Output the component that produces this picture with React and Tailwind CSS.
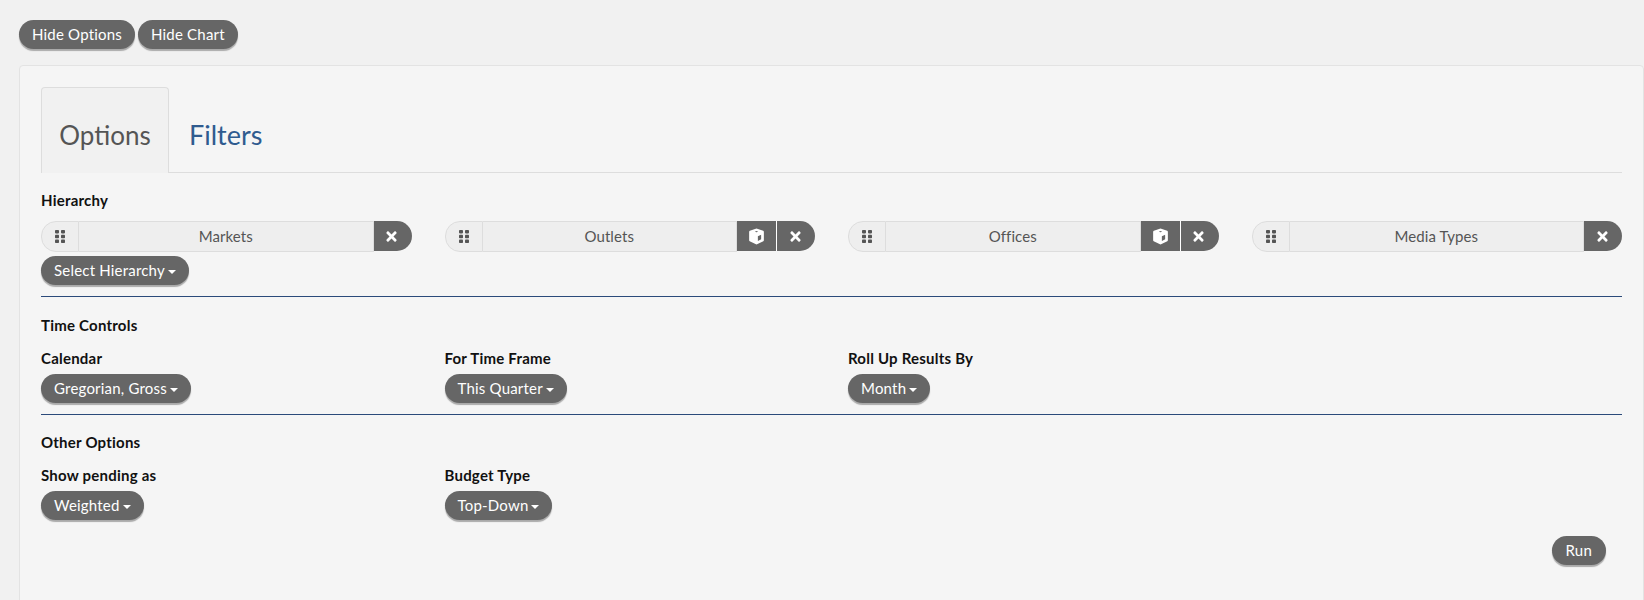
import React from "react";
import { FaTimes } from "react-icons/fa";

const Btn = ({ children, caret, className = "px-[13px]" }) => (
  <button className={`inline-flex h-[29px] items-center rounded-[15px] bg-[#666666] text-[15px] leading-none tracking-[0.2px] text-white shadow-[0_2px_1px_#aaaaaa] ${className}`}>
    {children}
    {caret && <span className="ml-[3px] mt-[2px] h-0 w-0 border-x-[4px] border-t-[4px] border-x-transparent border-t-white" />}
  </button>
);

const Grip = () => (
  <svg width="10" height="13" viewBox="0 0 10 13" fill="#555555">
    <rect x="0" y="0" width="4" height="3.4" rx="0.8" />
    <rect x="6" y="0" width="4" height="3.4" rx="0.8" />
    <rect x="0" y="4.8" width="4" height="3.4" rx="0.8" />
    <rect x="6" y="4.8" width="4" height="3.4" rx="0.8" />
    <rect x="0" y="9.6" width="4" height="3.4" rx="0.8" />
    <rect x="6" y="9.6" width="4" height="3.4" rx="0.8" />
  </svg>
);

const Cube = () => (
  <svg width="17" height="17" viewBox="0 0 15 15">
    <path d="M7.5.5 13.4 2.4Q14 2.7 14 3.3V10.8Q14 11.3 13.5 11.6L7.5 14.5 1.5 11.6Q1 11.3 1 10.8V3.3Q1 2.7 1.6 2.4Z" fill="#ffffff" />
    <path d="M6 3.2 7.5 2.7 9 3.2 7.5 3.8Z" fill="#666666" />
    <path d="M8.7 7.2 11.6 6V10L8.7 11.5Z" fill="#666666" />
  </svg>
);

const HierarchyItem = ({ name, cube }) => (
  <div className="flex h-[31px] text-[15px] tracking-[0.1px] text-[#555555]">
    <div className="flex w-[38px] items-center justify-center rounded-l-[15px] border border-[#dddddd] bg-[#eeeeee]">
      <Grip />
    </div>
    <div className="flex flex-1 items-center justify-center border-y border-r border-[#dddddd] bg-[#eeeeee]">{name}</div>
    {cube && (
      <div className="mb-px flex w-[40px] items-center justify-center border-r border-white bg-[#666666]">
        <Cube />
      </div>
    )}
    <div className="mb-px flex w-[38px] items-center justify-center rounded-r-[15px] bg-[#666666] pr-[2px]">
      <FaTimes className="text-[15px] text-white" />
    </div>
  </div>
);

const Label = ({ children, className = "" }) => (
  <div className={`text-[15px] font-bold leading-[20px] tracking-[0.22px] text-[#111111] ${className}`}>{children}</div>
);

const Field = ({ label, value }) => (
  <div>
    <Label className="mb-[6px]">{label}</Label>
    <Btn caret>{value}</Btn>
  </div>
);

export default function App() {
  return (
    <div className="h-[600px] overflow-hidden bg-[#f1f1f1] font-['Lato',sans-serif]">
      <div className="flex gap-[3px] pl-[19px] pt-[20px]">
        <Btn>Hide Options</Btn>
        <Btn>Hide Chart</Btn>
      </div>
      <div className="mt-[16px] ml-[19px] h-[600px] rounded-[4px] border border-[#e3e3e3] bg-[#f5f5f5] px-[21px] pt-[21px]">
        <div className="flex h-[86px] border-b border-[#dddddd]">
          <div className="-mb-px flex w-[128px] items-center justify-center rounded-t-[4px] border border-b-0 border-[#dddddd] bg-[#f1f1f1] pt-[10px] text-[26px] text-[#555555]">
            Options
          </div>
          <div className="flex items-center pl-[20px] pt-[12px] text-[27px] text-[#2f5b8f]">Filters</div>
        </div>

        <Label className="mt-[17px]">Hierarchy</Label>
        <div className="mt-[11px] grid grid-cols-4 gap-x-[33px]">
          <HierarchyItem name="Markets" />
          <HierarchyItem name="Outlets" cube />
          <HierarchyItem name="Offices" cube />
          <HierarchyItem name="Media Types" />
        </div>
        <div className="mt-[4px]">
          <Btn caret>Select Hierarchy</Btn>
        </div>
        <div className="mt-[11px] border-t border-[#2b4a7a]" />

        <Label className="mt-[18px]">Time Controls</Label>
        <div className="mt-[13px] grid grid-cols-4 gap-x-[33px]">
          <Field label="Calendar" value="Gregorian, Gross" />
          <Field label="For Time Frame" value="This Quarter" />
          <Field label="Roll Up Results By" value="Month" />
        </div>
        <div className="mt-[11px] border-t border-[#2b4a7a]" />

        <Label className="mt-[17px]">Other Options</Label>
        <div className="mt-[13px] grid grid-cols-4 gap-x-[33px]">
          <Field label="Show pending as" value="Weighted" />
          <Field label="Budget Type" value="Top-Down" />
        </div>
        <div className="mt-[16px] flex justify-end pr-[16px]">
          <Btn className="px-[14px]">Run</Btn>
        </div>
      </div>
    </div>
  );
}
